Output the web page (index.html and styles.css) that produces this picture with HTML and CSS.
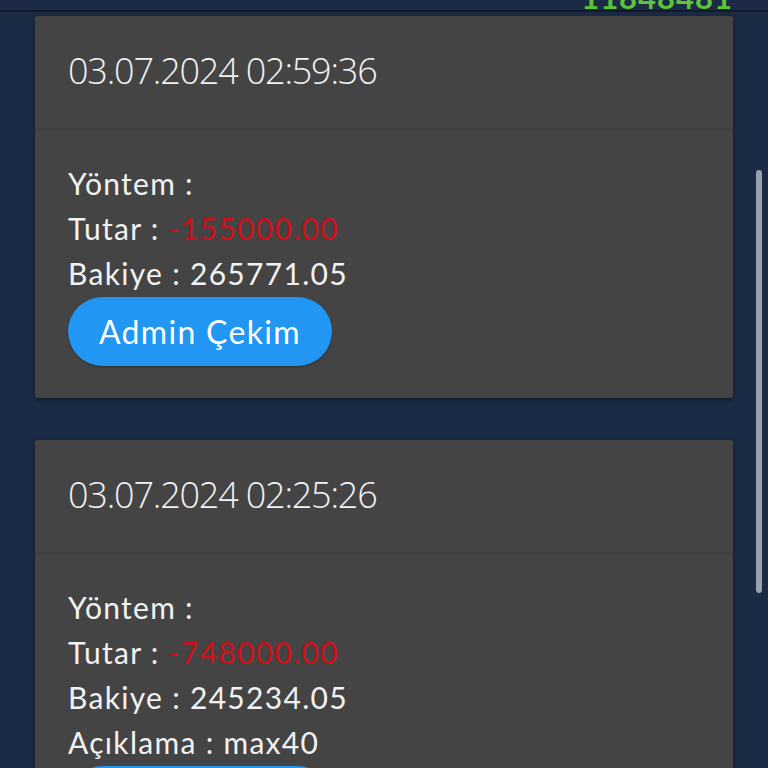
FILE: index.html
```html
<!DOCTYPE html>
<html lang="tr">
<head>
<meta charset="utf-8">
<link rel="stylesheet" href="styles.css">
</head>
<body>
<div class="topbar"><span class="balance">11848481</span></div>
<div class="list">
  <div class="card">
    <div class="card-head">03.07.2024 02:59:36</div>
    <div class="card-body">
      <div class="line">Yöntem : </div>
      <div class="line">Tutar : <span class="neg">-155000.00</span></div>
      <div class="line">Bakiye : 265771.05</div>
      <button class="pill">Admin Çekim</button>
    </div>
  </div>
  <div class="card">
    <div class="card-head">03.07.2024 02:25:26</div>
    <div class="card-body">
      <div class="line">Yöntem : </div>
      <div class="line">Tutar : <span class="neg">-748000.00</span></div>
      <div class="line">Bakiye : 245234.05</div>
      <div class="line">Açıklama : max40</div>
      <button class="pill">Admin Çekim</button>
    </div>
  </div>
</div>
<div class="scrollbar"></div>
</body>
</html>
```
FILE: styles.css
```css
html, body {
  margin: 0;
  padding: 0;
  height: 768px;
  overflow: hidden;
  background: #1c2b45;
  font-family: "Lato", "Noto Sans", sans-serif;
  color: #f2f2f2;
}
.topbar {
  height: 10px;
  border-bottom: 2px solid #121a27;
  display: flex;
  justify-content: flex-end;
  padding-right: 35px;
  overflow: hidden;
}
.balance {
  color: #5cc43a;
  font-size: 31px;
  line-height: 30px;
  margin-top: -18px;
  font-weight: 700;
  letter-spacing: 1px;
}
.list {
  padding: 4px 35px 0 35px;
  display: flex;
  flex-direction: column;
  gap: 42px;
}
.card {
  background: #444444;
  border-radius: 2px;
  box-shadow: 0 2px 4px rgba(0, 0, 0, 0.45);
}
.card-head {
  height: 108px;
  padding-bottom: 4px;
  display: flex;
  align-items: center;
  padding-left: 33px;
  font-family: "Open Sans", "DejaVu Sans Condensed", sans-serif;
  font-stretch: 88%;
  font-weight: 300;
  font-size: 36px;
  letter-spacing: -1.2px;
  border-bottom: 2px solid #3c3c3c;
}
.card-body {
  padding: 31px 33px 32px 33px;
}
.line {
  font-size: 30px;
  line-height: 45px;
  letter-spacing: 1.3px;
}
.neg {
  color: #d10f1a;
}
.pill {
  display: inline-block;
  margin-top: 1px;
  height: 69px;
  padding: 0 31px;
  border: none;
  border-radius: 35px;
  background: #2196f3;
  color: #ffffff;
  font-family: "Lato", "Noto Sans", sans-serif;
  font-size: 32px;
  letter-spacing: 1.3px;
  box-shadow: 0 1px 2px rgba(0, 0, 0, 0.3);
}
.scrollbar {
  position: absolute;
  left: 756px;
  top: 170px;
  width: 6px;
  height: 423px;
  border-radius: 3px;
  background: #98a1ae;
}
```
